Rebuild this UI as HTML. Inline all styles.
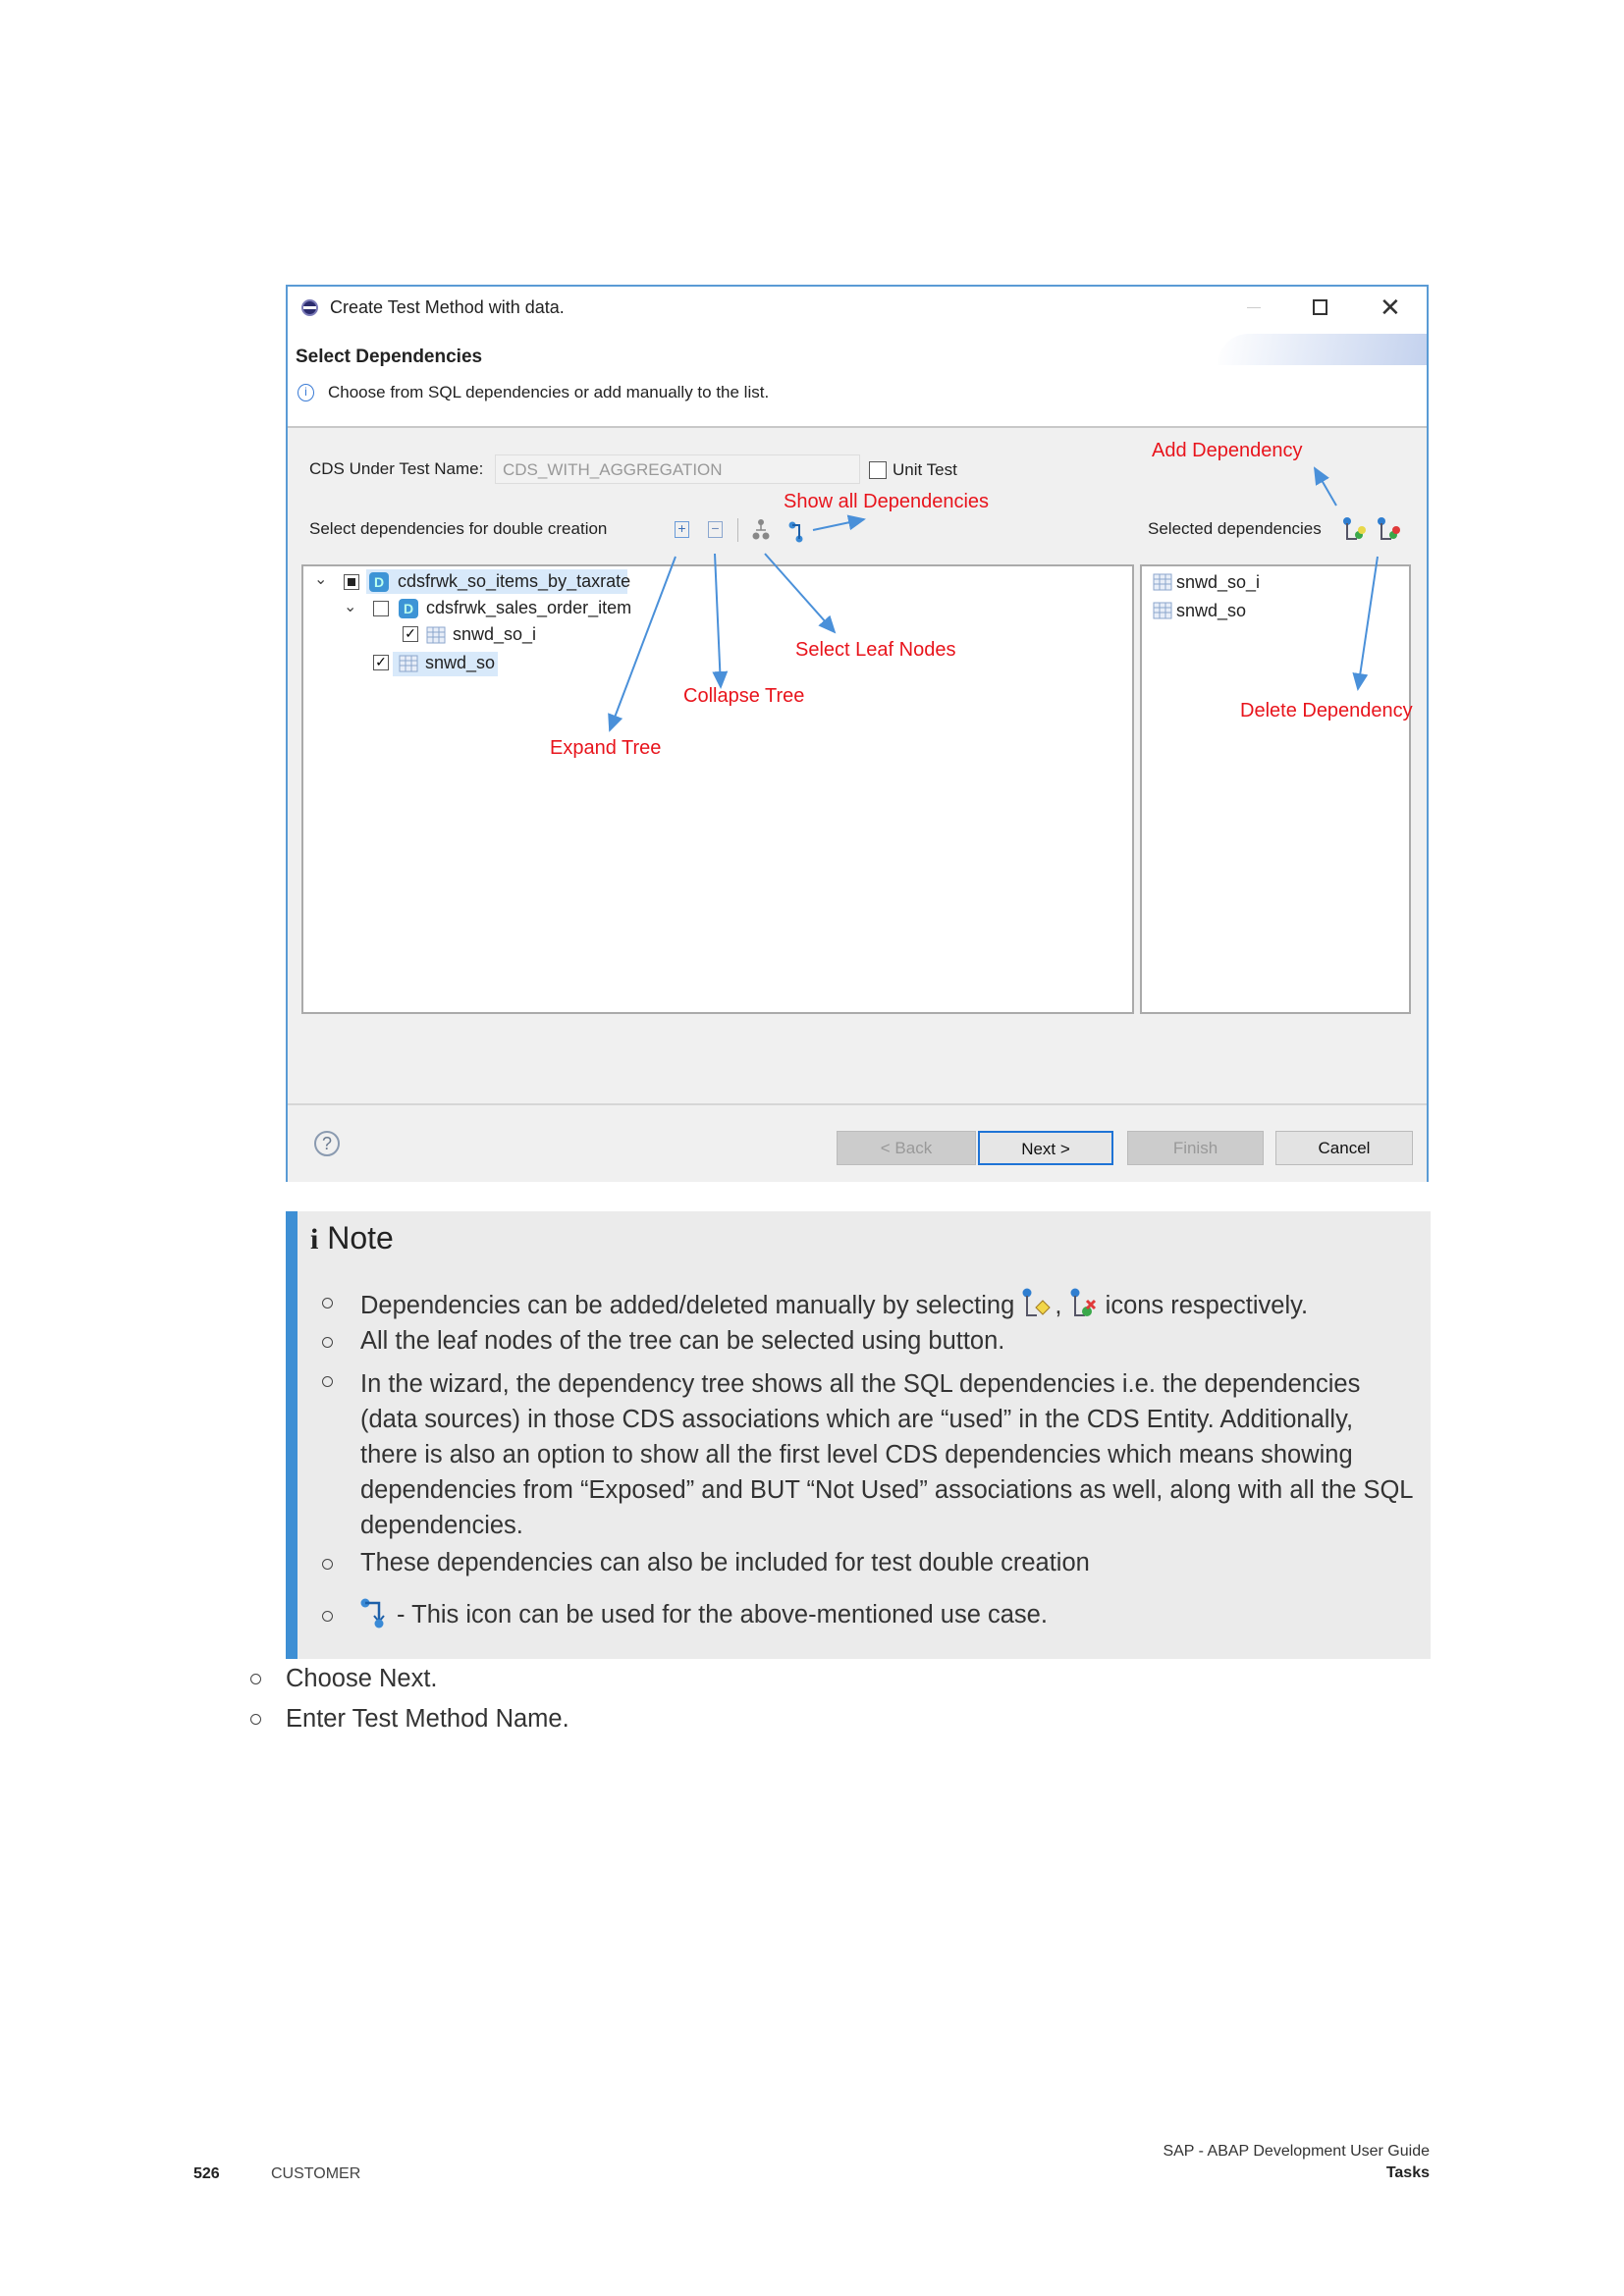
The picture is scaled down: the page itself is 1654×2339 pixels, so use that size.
<!DOCTYPE html>
<html><head><meta charset="utf-8"><style>
*{margin:0;padding:0;box-sizing:border-box}
body{width:1654px;height:2339px;background:#fff;position:relative;font-family:"Liberation Sans",sans-serif;overflow:hidden}
.a{position:absolute;white-space:nowrap}
.d{font-size:18px;color:#222}
.r{color:#e8141c;font-size:20px}
.t{font-size:25.5px;color:#333}
.cb{position:absolute;width:16px;height:16px;border:1.5px solid #555;background:#fff}
.btn{position:absolute;top:1152px;height:35px;font-size:17px;text-align:center;line-height:33px;border:1px solid #bbb;background:#ccc;color:#999}
.bul{position:absolute;width:11px;height:11px;border:1.5px solid #444;border-radius:50%}
</style></head><body>
<!-- dialog -->
<div class="a" style="left:291px;top:290px;width:1164px;height:914px;border:2px solid #5a9bd5;border-bottom:none;background:#f0f0f0"></div>
<div class="a" style="left:293px;top:292px;width:1160px;height:142px;background:#fff"></div>
<div class="a" style="left:1240px;top:340px;width:213px;height:32px;background:linear-gradient(100deg,#fff 0%,#e6ecf8 40%,#c4d2ee 100%);border-radius:40px 0 0 0"></div>
<div class="a" style="left:293px;top:434px;width:1160px;height:2px;background:#c8c8c8"></div>
<div class="a" style="left:293px;top:1124px;width:1160px;height:2px;background:#d6d6d6"></div>
<div class="a" style="left:307px;top:305px;width:17px;height:17px;border-radius:50%;background:#2c2c6e;border:2px solid #7b7bb8"></div>
<div class="a" style="left:309px;top:312px;width:13px;height:3px;background:#fff"></div>
<div class="a d" style="left:336px;top:303px">Create Test Method with data.</div>
<div class="a" style="left:1270px;top:313px;width:14px;height:1px;background:#ccc"></div>
<div class="a" style="left:1337px;top:305px;width:15px;height:16px;border:2px solid #333"></div>
<div class="a" style="left:1405px;top:298px;font-size:26px;color:#333">✕</div>
<div class="a d" style="left:301px;top:353px;font-weight:bold;font-size:19px">Select Dependencies</div>
<div class="a" style="left:303px;top:391px;width:17px;height:18px;border:1.5px solid #3a7bd5;border-radius:50%;font-size:12px;color:#3a7bd5;text-align:center;line-height:15px">i</div>
<div class="a d" style="left:334px;top:390px;font-size:17px">Choose from SQL dependencies or add manually to the list.</div>
<div class="a d" style="left:315px;top:468px;font-size:17px">CDS Under Test Name:</div>
<div class="a" style="left:504px;top:463px;width:372px;height:30px;background:#f2f2f2;border:1px solid #ddd;font-size:17px;color:#999;padding:5px 7px">CDS_WITH_AGGREGATION</div>
<div class="cb" style="left:885px;top:470px;width:18px;height:18px"></div>
<div class="a d" style="left:909px;top:469px;font-size:17px">Unit Test</div>
<div class="a d" style="left:315px;top:529px;font-size:17px">Select dependencies for double creation</div>
<!-- toolbar icons -->
<div class="a" style="left:687px;top:531px;width:15px;height:17px;border:1.5px solid #6a9bd8;font-size:14px;line-height:13px;text-align:center;color:#3a6fb8">+</div>
<div class="a" style="left:721px;top:531px;width:15px;height:17px;border:1.5px solid #8aa6cf;font-size:14px;line-height:13px;text-align:center;color:#6a88b8">−</div>
<div class="a" style="left:751px;top:528px;width:1px;height:24px;background:#bbb"></div>
<svg class="a" style="left:762px;top:526px" width="70" height="30"><g fill="#888"><circle cx="13" cy="6" r="3"/><circle cx="8" cy="20" r="3.5"/><circle cx="18" cy="20" r="3.5"/></g><path d="M13 6V14M8 14H18" stroke="#888" stroke-width="1.5"/><g fill="#3a8ad6"><circle cx="45" cy="9" r="3.5"/><circle cx="52" cy="23" r="3.5"/></g><path d="M45 9H52V23" stroke="#1c5fa8" stroke-width="2" fill="none"/></svg>
<div class="a d" style="left:1169px;top:529px;font-size:17px">Selected dependencies</div>
<svg class="a" style="left:1364px;top:525px" width="75" height="30"><g><circle cx="8" cy="6" r="4" fill="#2f7ed0"/><path d="M8 8V24H18" stroke="#556" stroke-width="2" fill="none"/><circle cx="20" cy="20" r="4" fill="#3aa84a"/><circle cx="23" cy="15" r="4" fill="#e8d84a"/><circle cx="43" cy="6" r="4" fill="#2f7ed0"/><path d="M43 8V24H53" stroke="#556" stroke-width="2" fill="none"/><circle cx="55" cy="20" r="4" fill="#3aa84a"/><circle cx="58" cy="15" r="4" fill="#e03a3a"/></g></svg>
<!-- tree box -->
<div class="a" style="left:307px;top:575px;width:848px;height:458px;background:#fff;border:2px solid #aaa"></div>
<div class="a" style="left:1161px;top:575px;width:276px;height:458px;background:#fff;border:2px solid #aaa"></div>
<div class="a" style="left:373px;top:580px;width:266px;height:25px;background:#d8e9fa"></div>
<div class="a" style="left:400px;top:664px;width:107px;height:25px;background:#d8e9fa"></div>
<div class="a" style="left:320px;top:580px;font-size:16px;color:#444">⌄</div>
<div class="a" style="left:350px;top:608px;font-size:16px;color:#444">⌄</div>
<div class="cb" style="left:350px;top:585px"></div><div class="a" style="left:354px;top:589px;width:8px;height:8px;background:#222"></div>
<div class="cb" style="left:380px;top:612px"></div>
<div class="cb" style="left:410px;top:638px;font-size:14px;line-height:12px;text-align:center">✓</div>
<div class="cb" style="left:380px;top:667px;font-size:14px;line-height:12px;text-align:center">✓</div>
<div class="a" style="left:376px;top:583px;width:20px;height:20px;border-radius:4px;background:#3d94d6;color:#bfe;font-weight:bold;font-size:14px;text-align:center;line-height:20px">D</div>
<div class="a" style="left:406px;top:610px;width:20px;height:20px;border-radius:4px;background:#3d94d6;color:#bfe;font-weight:bold;font-size:14px;text-align:center;line-height:20px">D</div>
<svg class="a" style="left:434px;top:638px" width="20" height="18"><rect x="1" y="1" width="18" height="16" fill="#e8eef8" stroke="#8ba6cc"/><path d="M1 6H19M1 11H19M7 1V17M13 1V17" stroke="#8ba6cc"/></svg>
<svg class="a" style="left:406px;top:667px" width="20" height="18"><rect x="1" y="1" width="18" height="16" fill="#e8eef8" stroke="#8ba6cc"/><path d="M1 6H19M1 11H19M7 1V17M13 1V17" stroke="#8ba6cc"/></svg>
<svg class="a" style="left:1174px;top:584px" width="20" height="18"><rect x="1" y="1" width="18" height="16" fill="#e8eef8" stroke="#8ba6cc"/><path d="M1 6H19M1 11H19M7 1V17M13 1V17" stroke="#8ba6cc"/></svg>
<svg class="a" style="left:1174px;top:613px" width="20" height="18"><rect x="1" y="1" width="18" height="16" fill="#e8eef8" stroke="#8ba6cc"/><path d="M1 6H19M1 11H19M7 1V17M13 1V17" stroke="#8ba6cc"/></svg>
<div class="a d" style="left:405px;top:582px">cdsfrwk_so_items_by_taxrate</div>
<div class="a d" style="left:434px;top:609px">cdsfrwk_sales_order_item</div>
<div class="a d" style="left:461px;top:636px">snwd_so_i</div>
<div class="a d" style="left:433px;top:665px">snwd_so</div>
<div class="a d" style="left:1198px;top:583px">snwd_so_i</div>
<div class="a d" style="left:1198px;top:612px">snwd_so</div>
<!-- annotations -->
<div class="a r" style="left:1173px;top:448px">Add Dependency</div>
<div class="a r" style="left:798px;top:500px">Show all Dependencies</div>
<div class="a r" style="left:810px;top:651px">Select Leaf Nodes</div>
<div class="a r" style="left:696px;top:698px">Collapse Tree</div>
<div class="a r" style="left:560px;top:751px">Expand Tree</div>
<div class="a r" style="left:1263px;top:713px">Delete Dependency</div>
<svg class="a" style="left:0;top:0" width="1654" height="1100">
<defs><marker id="m" markerWidth="10" markerHeight="10" refX="8" refY="5" orient="auto"><path d="M0 1L9 5L0 9Z" fill="#4a90d9"/></marker></defs>
<g stroke="#4a90d9" stroke-width="2" marker-end="url(#m)">
<line x1="688" y1="567" x2="621" y2="744"/>
<line x1="728" y1="564" x2="734" y2="700"/>
<line x1="779" y1="564" x2="850" y2="644"/>
<line x1="828" y1="540" x2="880" y2="529"/>
<line x1="1361" y1="515" x2="1339" y2="477"/>
<line x1="1403" y1="567" x2="1383" y2="702"/>
</g></svg>
<!-- footer -->
<div class="a" style="left:320px;top:1152px;width:26px;height:26px;border:2px solid #8a9ab0;border-radius:50%;text-align:center;font-size:18px;line-height:22px;color:#6a7a90">?</div>
<div class="btn" style="left:852px;width:142px">&lt; Back</div>
<div class="btn" style="left:996px;width:138px;background:#e6e6e6;border:2px solid #1e73d6;color:#111">Next &gt;</div>
<div class="btn" style="left:1148px;width:139px">Finish</div>
<div class="btn" style="left:1299px;width:140px;background:#e3e3e3;color:#111">Cancel</div>
<!-- note -->
<div class="a" style="left:291px;top:1234px;width:1166px;height:456px;background:#ebebeb"></div>
<div class="a" style="left:291px;top:1234px;width:12px;height:456px;background:#3e8fd4"></div>
<div class="a" style="left:316px;top:1243px;font-size:32px;color:#222"><span style="font-family:'Liberation Serif',serif;font-weight:bold;font-size:30px">i</span> Note</div>
<div class="bul" style="left:328px;top:1322px"></div>
<div class="bul" style="left:328px;top:1362px"></div>
<div class="bul" style="left:328px;top:1402px"></div>
<div class="bul" style="left:328px;top:1588px"></div>
<div class="bul" style="left:328px;top:1641px"></div>
<div class="a t" style="left:367px;top:1312px">Dependencies can be added/deleted manually by selecting <svg width="34" height="32" style="vertical-align:-6px"><circle cx="6" cy="5" r="4.5" fill="#2f7ed0"/><path d="M6 8V28H16" stroke="#556" stroke-width="2" fill="none"/><path d="M22 13L29 20L22 27L15 20Z" fill="#f2d64a" stroke="#a07a20"/></svg>, <svg width="30" height="32" style="vertical-align:-6px"><circle cx="6" cy="5" r="4.5" fill="#2f7ed0"/><path d="M6 8V28H16" stroke="#556" stroke-width="2" fill="none"/><circle cx="18" cy="24" r="5" fill="#3aa84a"/><path d="M18 13L26 21M26 13L18 21" stroke="#e03a3a" stroke-width="3"/></svg> icons respectively.</div>
<div class="a t" style="left:367px;top:1352px">All the leaf nodes of the tree can be selected using button.</div>
<div class="a t" style="left:367px;top:1392px;line-height:36px">In the wizard, the dependency tree shows all the SQL dependencies i.e. the dependencies<br>(data sources) in those CDS associations which are “used” in the CDS Entity. Additionally,<br>there is also an option to show all the first level CDS dependencies which means showing<br>dependencies from “Exposed” and BUT “Not Used” associations as well, along with all the SQL<br>dependencies.</div>
<div class="a t" style="left:367px;top:1578px">These dependencies can also be included for test double creation</div>
<svg class="a" style="left:366px;top:1627px" width="32" height="34"><circle cx="6" cy="6" r="4.5" fill="#3a8ad6"/><path d="M6 6H20V24" stroke="#1c5fa8" stroke-width="2.5" fill="none"/><path d="M15 19L20 25L25 19" stroke="#1c5fa8" stroke-width="2" fill="none"/><circle cx="20" cy="27" r="4.5" fill="#3a8ad6"/></svg>
<div class="a t" style="left:404px;top:1631px">- This icon can be used for the above-mentioned use case.</div>
<div class="bul" style="left:255px;top:1705px"></div>
<div class="bul" style="left:255px;top:1746px"></div>
<div class="a t" style="left:291px;top:1696px">Choose Next.</div>
<div class="a t" style="left:291px;top:1737px">Enter Test Method Name.</div>
<div class="a" style="left:100px;top:2183px;width:1356px;text-align:right;font-size:16px;color:#333">SAP - ABAP Development User Guide</div>
<div class="a" style="left:100px;top:2205px;width:1356px;text-align:right;font-size:16px;color:#222;font-weight:bold">Tasks</div>
<div class="a" style="left:197px;top:2206px;font-size:16px;font-weight:bold;color:#222">526</div>
<div class="a" style="left:276px;top:2206px;font-size:16px;color:#444">CUSTOMER</div>
</body></html>
